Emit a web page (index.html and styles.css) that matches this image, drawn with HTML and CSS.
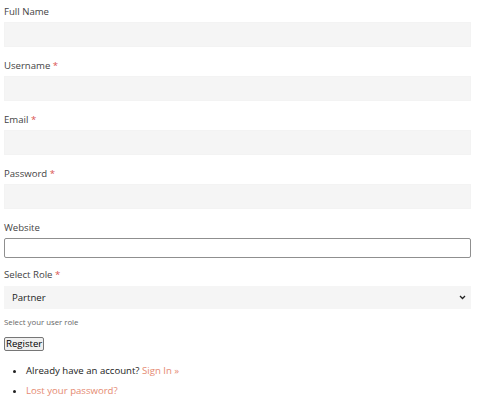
FILE: index.html
```html
<!DOCTYPE html>
<html>
<head>
<meta charset="utf-8">
<link rel="stylesheet" href="styles.css">
</head>
<body>
<form class="reg-form">
  <div class="field">
    <label class="lbl">Full Name</label>
    <input class="inp" type="text">
  </div>
  <div class="field">
    <label class="lbl">Username <span class="req">*</span></label>
    <input class="inp" type="text">
  </div>
  <div class="field">
    <label class="lbl">Email <span class="req">*</span></label>
    <input class="inp" type="text">
  </div>
  <div class="field">
    <label class="lbl">Password <span class="req">*</span></label>
    <input class="inp" type="password">
  </div>
  <div class="field field-web">
    <label class="lbl">Website</label>
    <input class="inp-plain" type="text">
  </div>
  <div class="field field-role">
    <label class="lbl">Select Role <span class="req">*</span></label>
    <div class="sel">
      <span>Partner</span>
      <svg class="chev" width="7" height="5" viewBox="0 0 7 5"><path d="M1 1 L3.5 3.5 L6 1" fill="none" stroke="#222" stroke-width="1.3"/></svg>
    </div>
    <p class="help">Select your user role</p>
  </div>
  <button class="btn" type="button">Register</button>
  <ul class="links">
    <li>Already have an account? <a href="#">Sign In »</a></li>
    <li><a href="#">Lost your password?</a></li>
  </ul>
</form>
</body>
</html>
```
FILE: styles.css
```css
html, body {
  margin: 0;
  padding: 0;
  background: #fff;
}
body {
  padding: 4px;
  font-family: "Open Sans", "Liberation Sans", sans-serif;
  font-size: 9.6px;
  color: #444;
}
.reg-form {
  width: 467px;
}
.field {
  margin-bottom: 11px;
}
.lbl {
  display: block;
  line-height: 16px;
  margin-bottom: 2px;
  color: #444;
}
.req {
  color: #d9534f;
}
.inp {
  display: block;
  box-sizing: border-box;
  width: 100%;
  height: 25px;
  border: 1px solid #f3f3f3;
  background: #f5f5f5;
  margin: 0;
  padding: 0 8px;
}
.field-web {
  margin-bottom: 9px;
}
.inp-plain {
  display: block;
  box-sizing: border-box;
  width: 100%;
  height: 20px;
  border: 1px solid #8f8f8f;
  border-radius: 2px;
  background: #fff;
  margin: 0;
}
.field-role .lbl {
  margin-bottom: 3px;
}
.sel {
  box-sizing: border-box;
  height: 23px;
  background: #f5f5f5;
  display: flex;
  align-items: center;
  justify-content: space-between;
  padding: 0 5px 0 8px;
  color: #222;
}
.help {
  margin: 7px 0 0;
  font-size: 7.8px;
  line-height: 12px;
  color: #666;
}
.field-role {
  margin-bottom: 9px;
}
.btn {
  font-family: "Open Sans", "Liberation Sans", sans-serif;
  font-size: 9.6px;
  line-height: 12px;
  padding: 0 1px;
  border: 1px solid #767676;
  border-radius: 2px;
  background: #efefef;
  color: #000;
}
.links {
  margin: 10px 0 0;
  padding-left: 22px;
  color: #222;
}
.links li {
  line-height: 20px;
}
.links a {
  color: #e58a72;
  text-decoration: none;
}
```
